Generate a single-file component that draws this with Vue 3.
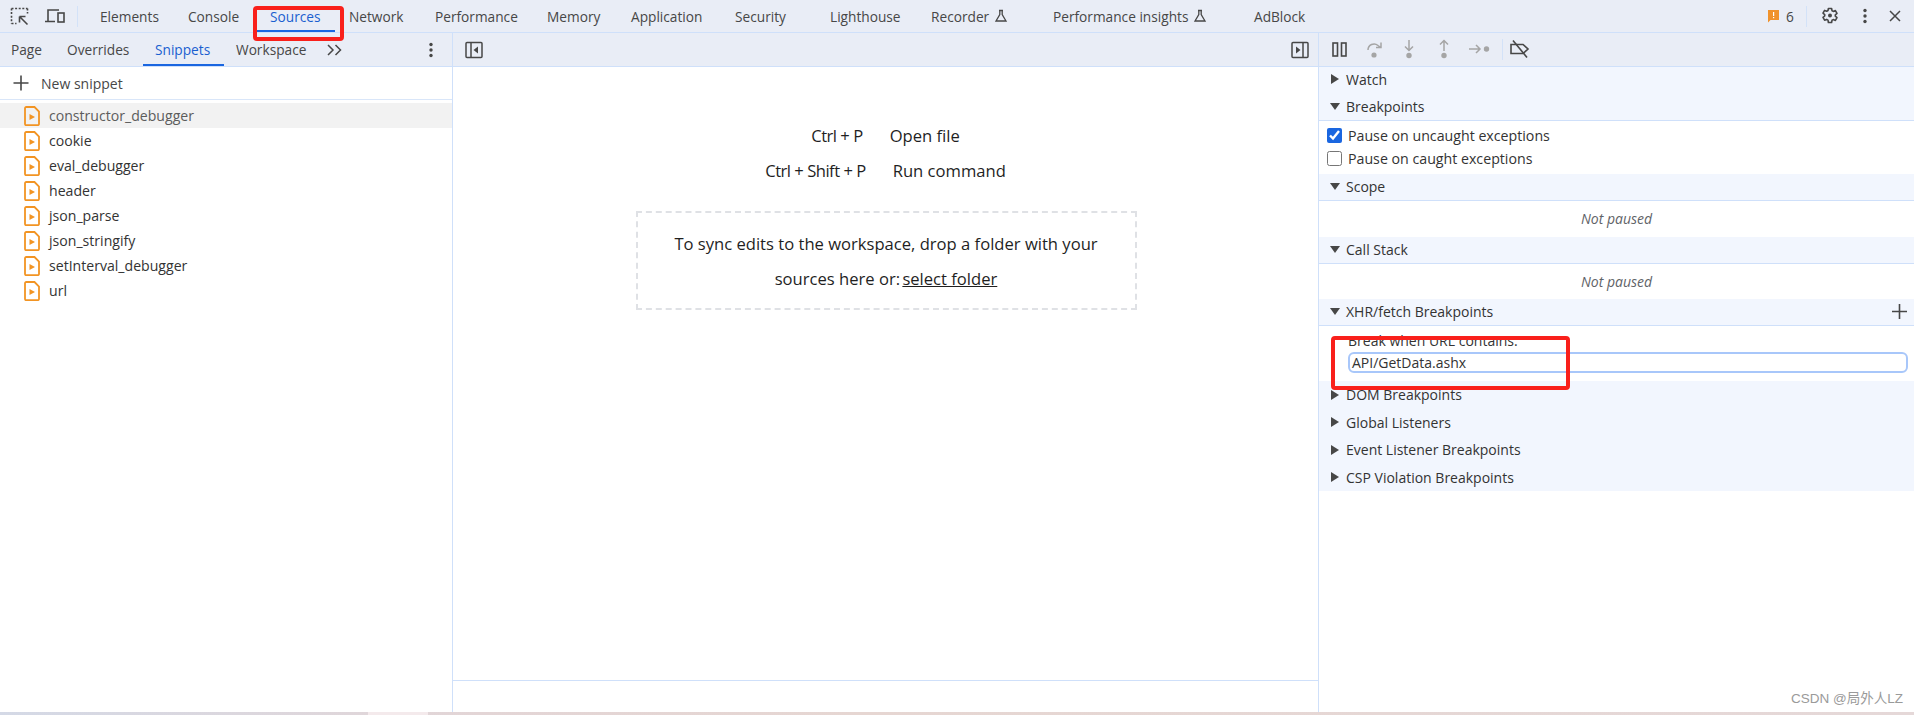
<script setup>
const mainTabs = [
  { t: 'Elements', w: 88 }, { t: 'Console', w: 82 }, { t: 'Sources', w: 79, active: true },
  { t: 'Network', w: 86 }, { t: 'Performance', w: 112 }, { t: 'Memory', w: 84 },
  { t: 'Application', w: 104 }, { t: 'Security', w: 95 }, { t: 'Lighthouse', w: 101 },
  { t: 'Recorder', w: 122, flask: true }, { t: 'Performance insights', w: 201, flask: true }, { t: 'AdBlock', w: 100 },
]
const panelTabs = [
  { t: 'Page', w: 56 }, { t: 'Overrides', w: 88 }, { t: 'Snippets', w: 81, active: true }, { t: 'Workspace', w: 91 },
]
const snippets = ['constructor_debugger', 'cookie', 'eval_debugger', 'header', 'json_parse', 'json_stringify', 'setInterval_debugger', 'url']
const collapsed = ['DOM Breakpoints', 'Global Listeners', 'Event Listener Breakpoints', 'CSP Violation Breakpoints']
</script>

<template>
  <div class="app">
    <header class="topbar">
      <div class="tool-icons">
        <svg width="20" height="20" viewBox="0 0 20 20" fill="none" stroke="#474747" stroke-width="1.6">
          <path d="M1.5 2.5h16M1.5 2.500v15M1.500 17.500h5M17.500 2.500v5" stroke-dasharray="2 1.6" />
          <path d="M9.500 10.500h6M9.500 10.500v6M9.500 10.500l8 8" />
        </svg>
        <svg width="22" height="20" viewBox="0 0 22 20" fill="none" stroke="#474747" stroke-width="1.6">
          <path d="M4 15V4h11M1 15.500h10" />
          <rect x="14" y="7" width="6" height="9" />
        </svg>
      </div>
      <span class="vsep"></span>
      <nav class="tabs">
        <span v-for="tab in mainTabs" :key="tab.t" class="tab" :class="{ on: tab.active }" :style="{ width: tab.w + 'px' }">
          {{ tab.t }}
          <svg v-if="tab.flask" class="flask" width="14" height="14" viewBox="0 0 14 14" fill="none" stroke="#474747" stroke-width="1.3">
            <path d="M5 1.500h4M5.800 1.500v4L2 12h10L8.200 5.500v-4" />
          </svg>
        </span>
      </nav>
      <div class="top-right">
        <svg width="11" height="13" viewBox="0 0 11 13">
          <path d="M0 0h11v10H2.500L0 12.500z" fill="#f0922b" />
          <rect x="5" y="2" width="1.200" height="4" fill="#fff" />
          <rect x="5" y="7" width="1.200" height="1.200" fill="#fff" />
        </svg>
        <span class="count">6</span>
        <span class="vsep right"></span>
        <svg class="gear" width="18" height="18" viewBox="0 0 18 18" fill="none" stroke="#474747" stroke-width="1.600" stroke-linejoin="round">
          <path d="M7.400 1.500h3.200l.4 2.200 1.300.7 2.100-.8 1.600 2.800-1.700 1.400v1.400l1.700 1.400-1.600 2.800-2.100-.8-1.300.7-.4 2.200H7.400L7 13.100l-1.300-.7-2.100.8L2 10.400l1.700-1.400V7.600L2 6.200l1.600-2.800 2.100.8L7 3.500z" />
          <circle cx="9" cy="8.500" r="2" fill="#474747" stroke="none" />
        </svg>
        <svg class="kebab-top" width="4" height="16" viewBox="0 0 4 16" fill="#474747">
          <circle cx="2" cy="2.500" r="1.700" /><circle cx="2" cy="8" r="1.700" /><circle cx="2" cy="13.500" r="1.700" />
        </svg>
        <svg class="close" width="12" height="12" viewBox="0 0 12 12" stroke="#474747" stroke-width="1.500">
          <path d="M1 1l10 10M11 1L1 11" />
        </svg>
      </div>
    </header>

    <main class="panes">
      <section class="left">
        <div class="subbar left-bar">
          <span v-for="tab in panelTabs" :key="tab.t" class="ptab" :class="{ on: tab.active }" :style="{ width: tab.w + 'px' }">{{ tab.t }}</span>
          <span class="more">
            <svg width="16" height="12" viewBox="0 0 16 12" fill="none" stroke="#474747" stroke-width="1.500">
              <path d="M1 1l5 5-5 5M8.500 1l5 5-5 5" />
            </svg>
          </span>
          <svg class="kebab-sub" width="4" height="16" viewBox="0 0 4 16" fill="#474747">
            <circle cx="2" cy="2.500" r="1.700" /><circle cx="2" cy="8" r="1.700" /><circle cx="2" cy="13.500" r="1.700" />
          </svg>
        </div>
        <div class="new-snippet">
          <svg width="16" height="16" viewBox="0 0 16 16" stroke="#474747" stroke-width="1.600"><path d="M8 .5v15M.5 8h15" /></svg>
          <span>New snippet</span>
        </div>
        <ul class="files">
          <li v-for="(s, i) in snippets" :key="s" :class="{ sel: i === 0 }">
            <svg width="16" height="20" viewBox="0 0 16 20" fill="none">
              <path d="M2.500 1h8l4.500 4.500v12.500a1.200 1.200 0 0 1-1.200 1.200H2.200A1.200 1.200 0 0 1 1 18V2.200A1.200 1.200 0 0 1 2.200 1z" stroke="#f29423" stroke-width="1.800" />
              <path d="M5.500 8l5.500 3-5.500 3z" fill="#f29423" />
            </svg>
            <span>{{ s }}</span>
          </li>
        </ul>
      </section>

      <section class="center">
        <div class="subbar center-bar">
          <svg width="18" height="18" viewBox="0 0 18 18" fill="none" stroke="#474747" stroke-width="1.500">
            <rect x="1" y="1.500" width="16" height="15" rx="1" />
            <path d="M6 1.500v15" />
            <path d="M13 5.500v7L8.500 9z" fill="#474747" stroke="none" />
          </svg>
          <svg width="18" height="18" viewBox="0 0 18 18" fill="none" stroke="#474747" stroke-width="1.500">
            <rect x="1" y="1.500" width="16" height="15" rx="1" />
            <path d="M12 1.500v15" />
            <path d="M5 5.500v7L9.500 9z" fill="#474747" stroke="none" />
          </svg>
        </div>
        <div class="welcome">
          <div class="shortcuts">
            <div class="shortcut"><span class="keys">Ctrl + P</span><span>Open file</span></div>
            <div class="shortcut"><span class="keys">Ctrl + Shift + P</span><span>Run command</span></div>
          </div>
          <div class="drop">
            <p>To sync edits to the workspace, drop a folder with your</p>
            <p>sources here or: <u>select folder</u></p>
          </div>
        </div>
        <div class="status"></div>
      </section>

      <section class="right">
        <div class="subbar debug-bar">
          <svg class="i-pause" width="15" height="15" viewBox="0 0 15 15" fill="none" stroke="#474747" stroke-width="1.600">
            <rect x="1" y="1" width="4.500" height="13" /><rect x="9.500" y="1" width="4.500" height="13" />
          </svg>
          <svg class="i-over" width="18" height="18" viewBox="0 0 18 18" fill="none" stroke="#a5a5a5" stroke-width="1.500">
            <path d="M2 9a6 6 0 0 1 10-4.500l2 1.500M15 1.500V6.500H10" />
            <circle cx="8" cy="14" r="2.600" fill="#a5a5a5" stroke="none" />
          </svg>
          <svg class="i-into" width="12" height="20" viewBox="0 0 12 20" fill="none" stroke="#a5a5a5" stroke-width="1.500">
            <path d="M6 1v10M2 7.500l4 4 4-4" />
            <circle cx="6" cy="16.500" r="2.700" fill="#a5a5a5" stroke="none" />
          </svg>
          <svg class="i-out" width="12" height="20" viewBox="0 0 12 20" fill="none" stroke="#a5a5a5" stroke-width="1.500">
            <path d="M6 12V2M2 5.500l4-4 4 4" />
            <circle cx="6" cy="16.500" r="2.700" fill="#a5a5a5" stroke="none" />
          </svg>
          <svg class="i-step" width="21" height="12" viewBox="0 0 21 12" fill="none" stroke="#a5a5a5" stroke-width="1.500">
            <path d="M0 6h11M7 2l4 4-4 4" />
            <circle cx="17.500" cy="6" r="2.700" fill="#a5a5a5" stroke="none" />
          </svg>
          <span class="vsep debug"></span>
          <svg class="i-deact" width="20" height="18" viewBox="0 0 20 18" fill="none" stroke="#474747" stroke-width="1.600">
            <path d="M1 4.500h12l5 4.500-5 4.500H1z" />
            <path d="M3 .5l14 17" />
          </svg>
        </div>

        <div class="sec-head first"><i class="tri closed"></i>Watch</div>
        <div class="sec-head ruled"><i class="tri open"></i>Breakpoints</div>
        <div class="checks">
          <label><input type="checkbox" checked /> Pause on uncaught exceptions</label>
          <label><input type="checkbox" /> Pause on caught exceptions</label>
        </div>
        <div class="sec-head ruled"><i class="tri open"></i>Scope</div>
        <div class="paused">Not paused</div>
        <div class="sec-head ruled"><i class="tri open"></i>Call Stack</div>
        <div class="paused short">Not paused</div>
        <div class="sec-head ruled">
          <i class="tri open"></i>XHR/fetch Breakpoints
          <svg class="add" width="15" height="15" viewBox="0 0 15 15" stroke="#474747" stroke-width="1.600"><path d="M7.500 0v15M0 7.500h15" /></svg>
        </div>
        <div class="xhr-body">
          <div class="xhr-label">Break when URL contains:</div>
          <div class="xhr-input">API/GetData.ashx</div>
        </div>
        <div class="collapsed-group">
          <div v-for="c in collapsed" :key="c" class="sec-head tall"><i class="tri closed"></i>{{ c }}</div>
        </div>
      </section>
    </main>

    <div class="strip"><span class="strip-light"></span></div>

    <div class="mark mark-sources"></div>
    <div class="mark mark-xhr"></div>
    <div class="watermark">CSDN @局外人LZ</div>
  </div>
</template>

<style>
html, body { margin: 0; padding: 0; background: #fff; }
</style>

<style scoped>
.app {
  position: relative;
  width: 1914px;
  height: 715px;
  overflow: hidden;
  display: flex;
  flex-direction: column;
  font-family: "Open Sans", "Noto Sans", sans-serif;
  font-size: 13.7px;
  color: #333;
  background: #fff;
}
.topbar {
  flex: none;
  height: 32px;
  display: flex;
  align-items: center;
  background: #e9edf6;
  border-bottom: 1px solid #cfe0fa;
}
.tool-icons { display: flex; align-items: center; gap: 14px; padding-left: 10px; width: 67px; }
.vsep { width: 1px; height: 21px; background: #d3e2f8; flex: none; }
.tabs { display: flex; margin-left: 22px; height: 32px; }
.tab {
  box-sizing: border-box;
  height: 32px;
  display: flex;
  align-items: center;
  gap: 5px;
  color: #474747;
  flex: none;
  white-space: nowrap;
  position: relative;
}
.tab.on { color: #1a5fd0; }
.tab.on::after {
  content: "";
  position: absolute;
  left: -15px;
  width: 80px;
  bottom: 0;
  height: 2px;
  background: #1a66e0;
}
.top-right { margin-left: auto; display: flex; align-items: center; height: 32px; padding-right: 13px; }
.count { margin-left: 7px; width: 8px; color: #474747; }
.vsep.right { margin-left: 12px; }
.gear { margin-left: 14px; }
.kebab-top { margin-left: 24px; }
.close { margin-left: 22px; }

.panes { flex: 1; min-height: 0; display: flex; }
.left { flex: none; width: 452px; border-right: 1px solid #cfe0fa; display: flex; flex-direction: column; }
.center { flex: none; width: 865px; border-right: 1px solid #cfe0fa; display: flex; flex-direction: column; }
.right { flex: 1; min-width: 0; display: flex; flex-direction: column; }

.subbar {
  flex: none;
  height: 33px;
  background: #e9edf6;
  border-bottom: 1px solid #cfe0fa;
  display: flex;
  align-items: center;
  position: relative;
}
.left-bar { padding-left: 11px; }
.ptab {
  box-sizing: border-box;
  height: 33px;
  display: flex;
  align-items: center;
  color: #474747;
  flex: none;
  position: relative;
}
.ptab.on { color: #1a5fd0; }
.ptab.on::after {
  content: "";
  position: absolute;
  left: -12px;
  width: 81px;
  bottom: 0;
  height: 2px;
  background: #1a66e0;
}
.more { display: flex; }
.kebab-sub { position: absolute; left: 429px; top: 9px; }
.new-snippet {
  height: 32px;
  display: flex;
  align-items: center;
  gap: 12px;
  padding-left: 13px;
  border-bottom: 1px solid #d9e6f9;
  color: #474747;
  font-size: 14px;
}
.files { list-style: none; margin: 3px 0 0; padding: 0; font-size: 14.100px; }
.files li { height: 25px; display: flex; align-items: center; gap: 9px; padding-left: 24px; }
.files li.sel { background: #f2f2f2; color: #5c5c5c; }

.center-bar { justify-content: space-between; padding: 0 9px 0 12px; }
.welcome { flex: 1; display: flex; flex-direction: column; align-items: center; padding-top: 51px; font-size: 16.600px; color: #1f1f1f; }
.shortcuts { display: flex; flex-direction: column; align-items: center; }
.shortcut { height: 35px; display: flex; align-items: center; gap: 27px; }
.keys { letter-spacing: -0.5px; }
.drop {
  box-sizing: border-box;
  width: 501px;
  height: 99px;
  margin: 23px 0 0 1px;
  border: 2px dashed #dfe1e5;
  display: flex;
  flex-direction: column;
  align-items: center;
  justify-content: center;
}
.drop p { margin: 0; line-height: 35px; white-space: nowrap; }
.drop u { margin-left: -2px; }
.status { flex: none; height: 31px; border-top: 1px solid #cfe0fa; }

.debug-bar svg { position: absolute; }
.i-pause { left: 13px; top: 9px; }
.i-over { left: 47px; top: 8px; }
.i-into { left: 84px; top: 6px; }
.i-out { left: 119px; top: 6px; }
.i-step { left: 150px; top: 10px; }
.vsep.debug { position: absolute; left: 183px; top: 6px; }
.i-deact { left: 191px; top: 7px; }

.sec-head {
  box-sizing: border-box;
  height: 26.750px;
  flex: none;
  display: flex;
  align-items: center;
  padding-left: 27px;
  font-size: 14px;
  color: #333;
  background: #f2f6fe;
  position: relative;
}
.sec-head.first { padding-bottom: 2px; }
.sec-head.tall { height: 27.500px; }
.sec-head.ruled { border-bottom: 1px solid #cfe0fa; }
.tri { position: absolute; left: 12px; width: 0; height: 0; }
.tri.closed { border-left: 8px solid #474747; border-top: 5px solid transparent; border-bottom: 5px solid transparent; }
.tri.open { left: 11px; border-top: 7px solid #474747; border-left: 5px solid transparent; border-right: 5px solid transparent; }
.add { position: absolute; right: 7px; top: 5px; }
.checks { height: 53.500px; padding-top: 3px; display: flex; flex-direction: column; box-sizing: border-box; flex: none; font-size: 14.200px; }
.checks label { height: 23px; display: flex; align-items: center; gap: 6px; padding-left: 8px; flex: none; }
.checks input { width: 15px; height: 15px; margin: 0; accent-color: #1a66e0; }
.paused { height: 36px; display: flex; align-items: center; justify-content: center; font-style: italic; color: #5f6368; flex: none; font-size: 14px; }
.paused.short { height: 35.500px; }
.xhr-body { height: 55px; padding: 8px 0 0 29px; box-sizing: border-box; flex: none; font-size: 14px; }
.xhr-label { line-height: 14px; height: 14px; color: #333; }
.xhr-input {
  box-sizing: border-box;
  margin-top: 4px;
  width: 560px;
  height: 21px;
  line-height: 17px;
  padding-left: 2px;
  border: 2px solid #a8c7fa;
  border-radius: 6px;
  color: #333;
}
.strip {
  flex: none;
  height: 3px;
  background: linear-gradient(90deg, #d4d9e6 0%, #e3d5d6 25%, #e6d6d2 45%, #e5d8d8 100%);
  position: relative;
}
.strip-light { position: absolute; left: 368px; top: 0; width: 60px; height: 3px; background: #f4eaec; }
.mark { position: absolute; box-sizing: border-box; border: 4px solid #f9201b; border-radius: 4px; pointer-events: none; }
.mark-sources { left: 253px; top: 6px; width: 91px; height: 35px; }
.mark-xhr { left: 1331px; top: 336px; width: 239px; height: 54px; }
.watermark {
  position: absolute;
  left: 1791px;
  top: 687px;
  font-family: "Liberation Sans", "Noto Sans CJK SC", sans-serif;
  font-size: 13.500px;
  color: #9a9a9a;
  white-space: nowrap;
}
</style>
